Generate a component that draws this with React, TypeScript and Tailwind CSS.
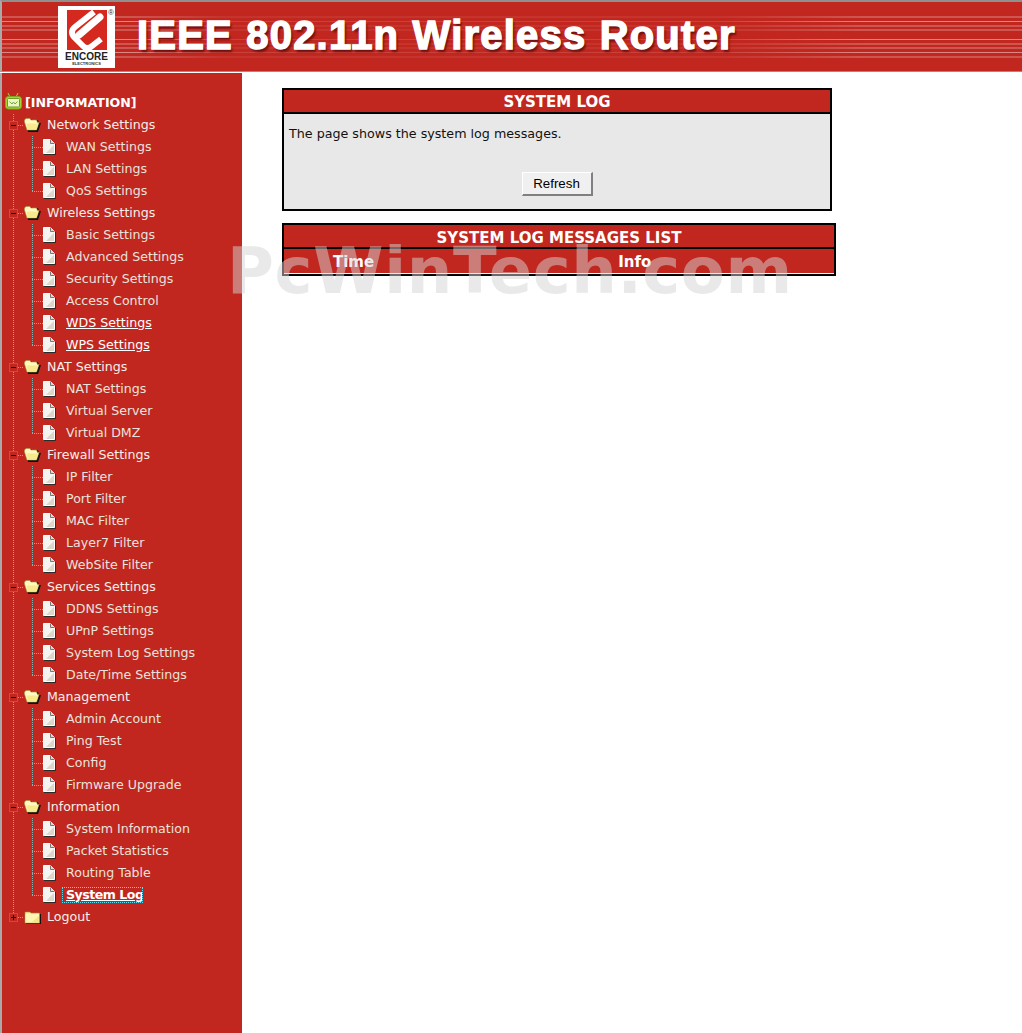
const groups = [
  { name: "Network Settings", items: ["WAN Settings", "LAN Settings", "QoS Settings"] },
  {
    name: "Wireless Settings",
    items: ["Basic Settings", "Advanced Settings", "Security Settings", "Access Control", "WDS Settings", "WPS Settings"],
  },
  { name: "NAT Settings", items: ["NAT Settings", "Virtual Server", "Virtual DMZ"] },
  { name: "Firewall Settings", items: ["IP Filter", "Port Filter", "MAC Filter", "Layer7 Filter", "WebSite Filter"] },
  { name: "Services Settings", items: ["DDNS Settings", "UPnP Settings", "System Log Settings", "Date/Time Settings"] },
  { name: "Management", items: ["Admin Account", "Ping Test", "Config", "Firmware Upgrade"] },
  { name: "Information", items: ["System Information", "Packet Statistics", "Routing Table", "System Log"] },
];

const underlined = ["WDS Settings", "WPS Settings"];

const dotsV = "w-px bg-[linear-gradient(180deg,#8fb0ac_50%,transparent_50%)] bg-[length:1px_2px]";
const dotsH = "h-px bg-[linear-gradient(90deg,#8fb0ac_50%,transparent_50%)] bg-[length:2px_1px]";

function PageIcon() {
  return (
    <svg width="14" height="16" viewBox="1 0 14 16" className="shrink-0">
      <path d="M1.5.5H8.5L12.5 4.5V14.5H1.5Z" fill="#f6f4f0" stroke="#ffffff" />
      <path d="M8.5 .5V4.5H12.5" fill="#d8d8d8" stroke="#777777" />
      <path d="M4 14 12 6V14Z" fill="#dcd6ca" />
      <path d="M13.5 5V15.5H2" fill="none" stroke="#2a2a2a" />
    </svg>
  );
}

function FolderIcon({ open }: { open: boolean }) {
  return open ? (
    <svg width="17" height="14" viewBox="0 0 17 14" className="shrink-0">
      <path d="M2 3 3 1H7L8 2H14L15 5H17L14 14H4Z" fill="#111111" />
      <path d="M.5 4V2L2 .5H6L7 2H12.5L13.5 4.5H15L12.5 12H3Z" fill="#fff9c0" stroke="#a8953a" strokeWidth=".6" />
      <path d="M3 5.5H14.5L12.5 11.5H3.5Z" fill="#f8e98c" />
    </svg>
  ) : (
    <svg width="17" height="14" viewBox="0 0 17 14" className="shrink-0">
      <path d="M1 2H6L7 3H15.5V13H1Z" fill="#fbeb9a" stroke="#9c8a30" strokeWidth=".6" />
      <path d="M1.5 4H15V12.5H1.5Z" fill="#fff6b4" />
      <path d="M8 12 15 6V12.5H8Z" fill="#f6e384" />
      <path d="M16.5 4V14H2" fill="none" stroke="#111111" />
    </svg>
  );
}

function TreeBox({ plus }: { plus?: boolean }) {
  return (
    <span className="relative flex h-[9px] w-[9px] shrink-0 items-center justify-center border border-[#707070] bg-[#c1271f]">
      <svg width="7" height="7" viewBox="0 0 7 7">
        <path d={plus ? "M1 3.5H6M3.5 1V6" : "M1 3.5H6"} stroke="#000000" strokeWidth="1" />
      </svg>
    </span>
  );
}

// dotted connectors of the tree, drawn per row like the old dtree gifs
function ChildRow({ label, last, active }: { label: string; last: boolean; active?: boolean }) {
  return (
    <div className="flex h-[22px] items-center">
      <div className="ml-[11px] h-full w-[19px] shrink-0">
        <div className={`h-full ${dotsV}`} />
      </div>
      <div className="relative h-full w-[11px] shrink-0">
        <div className={`absolute left-0 top-0 ${dotsV} ${last ? "h-[11px]" : "h-full"}`} />
        <div className={`absolute left-0 top-[11px] w-[11px] ${dotsH}`} />
      </div>
      <PageIcon />
      {active ? (
        <span className="ml-[5px] h-[16px] w-[81px] overflow-hidden border border-dotted border-[#5fe0f0] pl-[3px] text-[12.6px] leading-[14px] font-bold tracking-[-0.5px] whitespace-nowrap text-white underline">
          {label}
        </span>
      ) : (
        <span className={`ml-[9px] text-[12.6px] ${underlined.includes(label) ? "text-white underline" : "text-[#e9e3dc]"}`}>
          {label}
        </span>
      )}
    </div>
  );
}

function FolderRow({ label, plus }: { label: string; plus?: boolean }) {
  return (
    <div className="relative flex h-[22px] items-center pl-[7px]">
      <div className={`absolute left-[11px] top-0 ${dotsV} ${plus ? "h-[11px]" : "h-full"}`} />
      <TreeBox plus={plus} />
      <div className={`w-[6px] shrink-0 ${dotsH}`} />
      <FolderIcon open={!plus} />
      <span className="ml-[6px] text-[12.6px] text-[#f5efe9]">{label}</span>
    </div>
  );
}

function Sidebar() {
  return (
    <aside className="w-[242px] shrink-0 border-l-2 border-[#a9a9a9] bg-[#c1271f] pt-[19px] pb-[105px] [font-family:'DejaVu_Sans',sans-serif]">
      <div className="flex h-[22px] items-center pl-[3px]">
        <svg width="17" height="17" viewBox="0 0 17 17" className="mb-[4px] shrink-0">
          <path d="M5 4 3 0M11 4 13 0" stroke="#a5d62e" />
          <rect x=".5" y="3.5" width="16" height="12.5" rx="3" fill="#a5d62e" stroke="#7aa822" />
          <rect x="2.5" y="5.5" width="12" height="8.5" rx="1" fill="#eaf6c6" stroke="#6d9c1f" />
          <path d="M4.5 8.5 7 11 8.5 9 10 11 12.5 8.5" fill="none" stroke="#7aa832" />
        </svg>
        <span className="ml-[3px] text-[12.6px] font-bold text-white">[INFORMATION]</span>
      </div>
      {groups.map((g) => (
        <div key={g.name}>
          <FolderRow label={g.name} />
          {g.items.map((item, i) => (
            <ChildRow key={item + i} label={item} last={i === g.items.length - 1} active={item === "System Log"} />
          ))}
        </div>
      ))}
      <FolderRow label="Logout" plus />
    </aside>
  );
}

function Logo() {
  return (
    <div className="relative mt-[1px] flex h-[62px] w-[57px] shrink-0 flex-col items-center bg-white pt-[4px]">
      <svg width="40" height="40" viewBox="0 0 40 40" className="shrink-0">
        <rect width="40" height="40" fill="#d5281f" />
        <path d="M27 2 8 17Q2 22 8 28L16 36Q20 40 25 36L34 29" fill="none" stroke="#ffffff" strokeWidth="6" />
        <path d="M12 25 33 7" fill="none" stroke="#ffffff" strokeWidth="7" strokeLinecap="round" />
      </svg>
      <span className="mt-[2px] text-[10px] leading-[9px] font-bold text-[#222222] [font-family:'Liberation_Sans',sans-serif]">
        ENCORE
      </span>
      <span className="text-[4px] leading-[5px] font-bold text-[#333333] [font-family:'Liberation_Sans',sans-serif]">
        ELECTRONICS
      </span>
      <span className="absolute right-[1px] top-[3px] text-[8px] leading-none text-[#333333] [font-family:'Liberation_Sans',sans-serif]">
        ®
      </span>
    </div>
  );
}

function Header() {
  return (
    <header className="h-[73px] border-b border-white">
      <div className="flex h-full items-center border-t-2 border-b border-l-2 border-t-[#8f8f8f] border-b-[#e0706a] border-l-[#a9a9a9] bg-[#c1271f] bg-[linear-gradient(90deg,transparent_130px,rgba(193,39,31,0.72)_220px,rgba(193,39,31,0.72)_720px,transparent_860px),linear-gradient(180deg,transparent_14px,rgba(255,255,255,0.22)_14px,rgba(255,255,255,0.22)_16px,transparent_16px,transparent_19px,rgba(255,255,255,0.45)_19px,rgba(255,255,255,0.45)_20px,transparent_20px,transparent_23px,rgba(255,255,255,0.22)_23px,rgba(255,255,255,0.22)_25px,transparent_25px,transparent_27px,rgba(255,255,255,0.22)_27px,rgba(255,255,255,0.22)_29px,transparent_29px,transparent_37px,rgba(255,255,255,0.45)_37px,rgba(255,255,255,0.45)_38px,transparent_38px,transparent_41px,rgba(255,255,255,0.22)_41px,rgba(255,255,255,0.22)_43px,transparent_43px,transparent_45px,rgba(255,255,255,0.22)_45px,rgba(255,255,255,0.22)_47px,transparent_47px,transparent_50px,rgba(255,255,255,0.45)_50px,rgba(255,255,255,0.45)_51px,transparent_51px,transparent_54px,rgba(255,255,255,0.22)_54px,rgba(255,255,255,0.22)_56px,transparent_56px)] pl-[56px]">
        <Logo />
        <h1 className="mb-[4px] ml-[22px] text-[40px] leading-none font-bold tracking-[1.2px] [word-spacing:1px] whitespace-nowrap text-white [-webkit-text-stroke:1.4px_white] [font-family:'Liberation_Sans',sans-serif] [text-shadow:2px_3px_2px_rgba(90,10,10,0.75)]">
          IEEE 802.11n Wireless Router
        </h1>
      </div>
    </header>
  );
}

const font = "[font-family:'DejaVu_Sans',sans-serif]";

function Main() {
  return (
    <main className={`relative flex-1 bg-white pt-[15px] pl-[40px] ${font}`}>
      <section className="w-[550px] border-2 border-black bg-[#e8e8e8]">
        <h2 className="h-[24px] border-b-2 border-black bg-[#c1271f] text-center text-[15px] leading-[24px] font-bold text-white">
          SYSTEM LOG
        </h2>
        <p className="pt-[12px] pl-[5px] text-[12.7px] leading-[16px] text-[#111111]">
          The page shows the system log messages.
        </p>
        <div className="flex justify-center pt-[30px] pb-[13px]">
          <button className="h-[24px] w-[71px] border border-r-2 border-b-2 border-t-white border-r-[#808080] border-b-[#808080] border-l-white bg-[#f0f0f0] text-[13.3px] text-black [font-family:'Liberation_Sans',sans-serif]">
            Refresh
          </button>
        </div>
      </section>
      <section className="mt-[12px] w-[554px] border-2 border-black bg-[#c1271f] text-white">
        <h2 className="h-[24px] border-b-2 border-black pt-[1px] text-center text-[15px] leading-[24px] font-bold">
          SYSTEM LOG MESSAGES LIST
        </h2>
        <div className="flex h-[25px] items-center border-b border-white pt-[2px] text-[15px] font-bold">
          <span className="ml-[49px]">Time</span>
          <span className="ml-[244px]">Info</span>
        </div>
      </section>
      {/* watermark sits over the page and the sidebar edge */}
      <div className="pointer-events-none absolute left-[-15px] top-[166px] text-[64px] leading-none font-bold tracking-[0.6px] whitespace-nowrap text-[rgba(212,212,212,0.5)]">
        PcWinTech.com
      </div>
    </main>
  );
}

export default function App() {
  return (
    <div className="flex min-h-[1033px] flex-col bg-white">
      <Header />
      <div className="flex flex-1">
        <Sidebar />
        <Main />
      </div>
    </div>
  );
}
